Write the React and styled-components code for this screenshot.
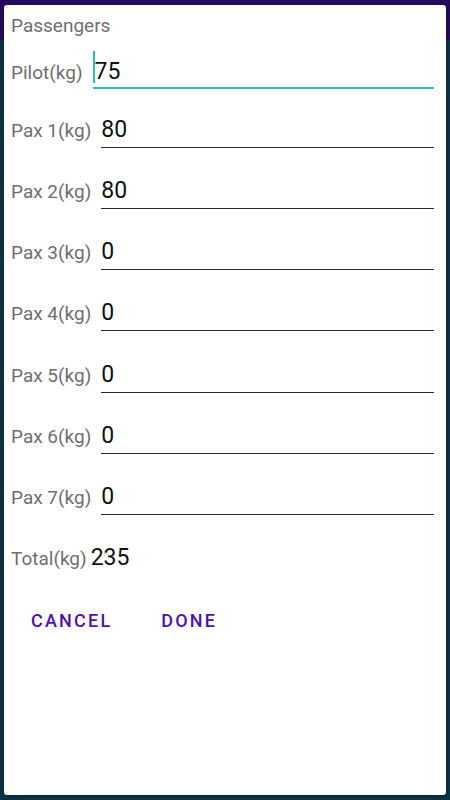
import React from 'react'
import styled, { createGlobalStyle } from 'styled-components'

const GlobalStyle = createGlobalStyle`
  html, body {
    margin: 0;
    padding: 0;
  }
  body {
    width: 450px;
    height: 800px;
    overflow: hidden;
    background: linear-gradient(#240a58 0, #240a58 40px, #0b3344 40px);
    font-family: Roboto, 'Noto Sans', 'Liberation Sans', sans-serif;
  }
`

const Dialog = styled.div`
  box-sizing: border-box;
  margin: 5px 4px;
  height: 790px;
  padding: 9px 12px 0 7px;
  background: #fff;
  border-radius: 3px;
  box-shadow: 0 1px 3px rgba(0, 0, 0, 0.4);
`

const Title = styled.div`
  font-size: 19px;
  line-height: 24px;
  color: #6f6f6f;
`

const Row = styled.div`
  display: flex;
  align-items: baseline;
  gap: 10px;
  margin-top: ${({ $top }) => $top}px;
`

const Label = styled.div`
  flex: 0 0 auto;
  font-size: 19px;
  color: #6f6f6f;
`

const Field = styled.div`
  position: relative;
  flex: 1 1 auto;
  font-size: 23px;
  line-height: 30px;
  color: #111;
  padding: 0 0 ${({ $active }) => ($active ? 0 : 2)}px ${({ $active }) => ($active ? 2 : 0)}px;
  border-bottom: ${({ $active }) => ($active ? '2px solid #22c5bd' : '1px solid #2a2a2a')};
`

const Caret = styled.span`
  position: absolute;
  left: 0;
  top: -6px;
  width: 2px;
  height: 32px;
  background: #22c5bd;
`

const TotalRow = styled.div`
  display: flex;
  align-items: baseline;
  gap: 4px;
  margin-top: 28px;
`

const TotalValue = styled.div`
  font-size: 23px;
  line-height: 30px;
  color: #111;
`

const ButtonBar = styled.div`
  display: flex;
  gap: 33px;
  margin-top: 38px;
  padding-left: 12px;
`

const TextButton = styled.button`
  border: none;
  background: none;
  padding: 0 8px;
  font-family: Roboto, 'Noto Sans', 'Liberation Sans', sans-serif;
  font-size: 18px;
  font-weight: 500;
  line-height: 20px;
  letter-spacing: 2.2px;
  color: #4d0fc0;
  cursor: pointer;
`

const pax = [80, 80, 0, 0, 0, 0, 0]

const App = () => {
  const total = 75 + pax.reduce((a, b) => a + b, 0)
  return (
    <>
      <GlobalStyle />
      <Dialog>
        <Title>Passengers</Title>
        <Row $top={18.5}>
          <Label>Pilot(kg)</Label>
          <Field $active>
            <Caret />
            75
          </Field>
        </Row>
        {pax.map((w, i) => (
          <Row key={i} $top={i === 0 ? 26 : 28.3}>
            <Label>{`Pax ${i + 1}(kg)`}</Label>
            <Field>{w}</Field>
          </Row>
        ))}
        <TotalRow>
          <Label>Total(kg)</Label>
          <TotalValue>{total}</TotalValue>
        </TotalRow>
        <ButtonBar>
          <TextButton>CANCEL</TextButton>
          <TextButton>DONE</TextButton>
        </ButtonBar>
      </Dialog>
    </>
  )
}

export default App
